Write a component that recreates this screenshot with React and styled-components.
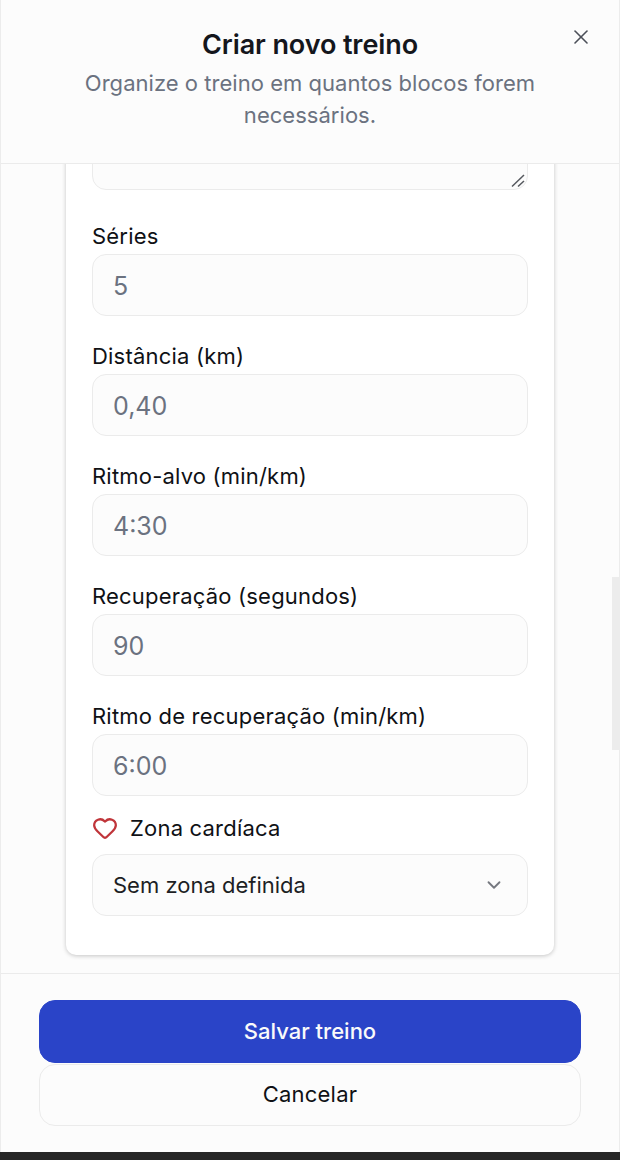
import React from "react";
import styled, { createGlobalStyle } from "styled-components";
import { X, Heart, ChevronDown } from "lucide-react";

const Global = createGlobalStyle`
  html, body { margin: 0; padding: 0; background: #262626; }
  * { box-sizing: border-box; }
  body { font-family: Inter, "Liberation Sans", sans-serif; }
`;

const Page = styled.div`
  width: 620px;
  height: 1160px;
  padding-bottom: 8px;
  overflow: hidden;
`;

const Dialog = styled.div`
  position: relative;
  height: 1152px;
  display: flex;
  flex-direction: column;
  background: #fcfcfc;
  border-left: 1px solid #ececec;
  border-right: 1px solid #ececec;
`;

const Header = styled.header`
  position: relative;
  flex: none;
  height: 164px;
  padding: 27px 40px 0;
  border-bottom: 1px solid #ebebeb;
  text-align: center;
`;

const Title = styled.h2`
  margin: 0;
  font-size: 27px;
  line-height: 36px;
  font-weight: 600;
  letter-spacing: -0.1px;
  color: #14161c;
`;

const Subtitle = styled.p`
  margin: 4px 0 0;
  font-size: 22px;
  line-height: 32px;
  letter-spacing: 0.03px;
  color: #6b7280;
`;

const Close = styled.button`
  position: absolute;
  top: 25px;
  right: 26px;
  width: 24px;
  height: 24px;
  padding: 0;
  border: 0;
  background: none;
  color: #4b4f58;
  display: flex;
  align-items: center;
  justify-content: center;
`;

const Body = styled.main`
  flex: 1;
  min-height: 0;
  overflow: hidden;
  display: flex;
  flex-direction: column;
  justify-content: flex-end;
  padding: 0 65px 18px;
`;

const Card = styled.section`
  flex: none;
  background: #fff;
  border-radius: 10px;
  box-shadow: 0 1px 4px rgba(0, 0, 0, 0.22);
  padding: 0 26px 39px;
  display: flex;
  flex-direction: column;
  gap: 25px;
`;

const Field = styled.div`
  display: flex;
  flex-direction: column;
  gap: 3px;
`;

const Label = styled.label`
  display: flex;
  align-items: center;
  gap: 12px;
  height: 30px;
  font-size: 22px;
  font-weight: 400;
  letter-spacing: 0.2px;
  color: #0f1115;
  ${(p) => p.$withIcon && "margin: -8px 0 8px;"}
`;

const NotesBox = styled.div`
  position: relative;
  margin-bottom: 6px;
`;

const Notes = styled.textarea`
  display: block;
  width: 100%;
  height: 120px;
  padding: 16px 20px;
  background: #fcfcfc;
  border: 1px solid #ebebeb;
  border-radius: 14px;
  resize: none;
  outline: none;
`;

const Grip = styled.svg`
  position: absolute;
  right: 2px;
  bottom: 2px;
  width: 16px;
  height: 16px;
  color: #55585e;
`;

const NumberInput = styled.input`
  width: 100%;
  height: 62px;
  padding: 1px 20px 0;
  background: #fcfcfc;
  border: 1px solid #ebebeb;
  border-radius: 14px;
  font: 400 25px Inter, "Liberation Sans", sans-serif;
  outline: none;
  &::placeholder { color: #6b7280; opacity: 1; }
`;

const Select = styled.div`
  height: 62px;
  padding: 0 22px 0 20px;
  display: flex;
  align-items: center;
  justify-content: space-between;
  background: #fcfcfc;
  border: 1px solid #ebebeb;
  border-radius: 14px;
  font-size: 22px;
  color: #1d1f24;
  svg { color: #75787f; }
`;

const Scrollbar = styled.div`
  position: absolute;
  top: 577px;
  right: 0;
  width: 7px;
  height: 173px;
  background: #ececec;
`;

const Footer = styled.footer`
  flex: none;
  height: 179px;
  padding: 26px 38px 0;
  border-top: 1px solid #ebebeb;
  display: flex;
  flex-direction: column;
  gap: 1px;
`;

const Button = styled.button`
  height: 62.5px;
  padding: 0 0 1px;
  border-radius: 16px;
  font: ${(p) => (p.$primary ? 500 : 400)} 22px Inter, "Liberation Sans", sans-serif;
  letter-spacing: ${(p) => (p.$primary ? "0" : "0.2px")};
  color: ${(p) => (p.$primary ? "#fafafa" : "#0f1115")};
  background: ${(p) => (p.$primary ? "#2a44c8" : "#fcfcfc")};
  border: 1px solid ${(p) => (p.$primary ? "#2a44c8" : "#ebebeb")};
`;

const fields = [
  ["Séries", "5"],
  ["Distância (km)", "0,40"],
  ["Ritmo-alvo (min/km)", "4:30"],
  ["Recuperação (segundos)", "90"],
  ["Ritmo de recuperação (min/km)", "6:00"],
];

export default function App() {
  return (
    <Page>
      <Global />
      <Dialog>
        <Header>
          <Title>Criar novo treino</Title>
          <Subtitle>Organize o treino em quantos blocos forem necessários.</Subtitle>
          <Close aria-label="Fechar"><X size={30} strokeWidth={1.6} /></Close>
        </Header>
        <Body>
          <Card>
            <NotesBox>
              <Notes aria-label="Observações" />
              <Grip viewBox="0 0 16 16" fill="none" stroke="currentColor" strokeWidth="1.5">
                <path d="M2 14.5 14 3" />
                <path d="M8 14.5 14 9" />
              </Grip>
            </NotesBox>
            {fields.map(([label, value]) => (
              <Field key={label}>
                <Label>{label}</Label>
                <NumberInput placeholder={value} aria-label={label} />
              </Field>
            ))}
            <Field>
              <Label $withIcon>
                <Heart size={26} color="#c0353a" strokeWidth={2.1} />
                Zona cardíaca
              </Label>
              <Select>
                Sem zona definida
                <ChevronDown size={22} strokeWidth={2} />
              </Select>
            </Field>
          </Card>
        </Body>
        <Footer>
          <Button $primary>Salvar treino</Button>
          <Button>Cancelar</Button>
        </Footer>
        <Scrollbar />
      </Dialog>
    </Page>
  );
}
